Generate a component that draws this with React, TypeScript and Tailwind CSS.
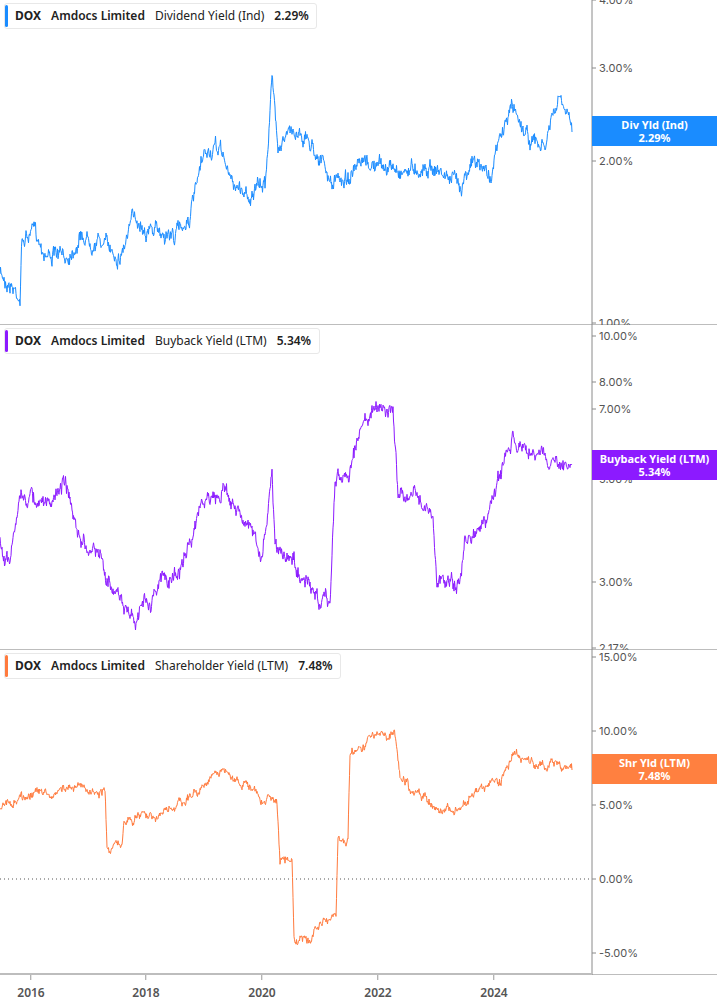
import React from "react";

type Pt = [number, number];

function rng(seed: number) {
  let s = seed;
  return () => {
    s = (s * 16807) % 2147483647;
    return s / 2147483647;
  };
}

function series(keys: Pt[], seed: number, amp: number, offset: number) {
  const r = rng(seed);
  const out: string[] = [];
  let walk = 0;
  for (let i = 0; i < keys.length - 1; i++) {
    const [x0, y0] = keys[i];
    const [x1, y1] = keys[i + 1];
    const steps = Math.max(1, Math.round((x1 - x0) * 2));
    for (let s = 0; s < steps; s++) {
      const t = s / steps;
      walk = walk * 0.85 + (r() - 0.5) * amp;
      const jitter = (r() - 0.5) * amp * 0.9;
      const x = x0 + (x1 - x0) * t;
      const y = y0 + (y1 - y0) * t + walk + jitter;
      out.push(`${x.toFixed(1)},${(y - offset).toFixed(1)}`);
    }
  }
  const last = keys[keys.length - 1];
  out.push(`${last[0]},${last[1] - offset}`);
  return out.join(" ");
}

const divKeys: Pt[] = [
  [0, 275], [8, 280], [20, 295], [22, 240], [35, 232], [45, 250], [65, 260], [80, 235], [100, 240],
  [120, 255], [135, 215], [150, 230], [175, 235], [190, 215], [205, 155], [222, 150], [230, 180],
  [250, 195], [265, 185], [272, 80], [278, 140], [300, 130], [320, 155], [330, 185], [350, 175],
  [370, 165], [400, 170], [430, 165], [460, 185], [470, 160], [490, 175], [500, 140], [512, 105],
  [530, 140], [545, 150], [550, 125], [560, 100], [572, 132],
];
const buyKeys: Pt[] = [
  [0, 540], [10, 560], [20, 490], [40, 510], [65, 485], [80, 540], [100, 560], [120, 600],
  [135, 615], [150, 605], [160, 580], [180, 570], [200, 510], [222, 490], [250, 520], [262, 560],
  [272, 475], [275, 540], [300, 575], [320, 595], [330, 600], [335, 480], [350, 470], [365, 420],
  [380, 410], [393, 410], [398, 490], [420, 500], [433, 520], [437, 580], [460, 585], [465, 540],
  [485, 520], [500, 470], [512, 440], [535, 455], [560, 460], [572, 465],
];
const shrKeys: Pt[] = [
  [0, 810], [20, 800], [60, 790], [105, 790], [107, 848], [122, 848], [124, 820], [150, 815],
  [180, 805], [222, 770], [240, 785], [270, 800], [277, 800], [280, 860], [292, 862], [294, 940],
  [310, 940], [320, 920], [336, 918], [338, 838], [348, 838], [350, 755], [365, 745], [372, 733],
  [395, 735], [400, 775], [410, 790], [430, 800], [440, 810], [460, 810], [480, 790], [500, 780],
  [513, 758], [540, 765], [572, 770],
];

type Tick = { label: string; y: number };

function Panel({
  color, metric, value, keys, seed, amp, offset, ticks, tag, tagY, legendW, zeroY,
}: {
  color: string; metric: string; value: string; keys: Pt[]; seed: number; amp: number; offset: number;
  ticks: Tick[]; tag: string; tagY: number; legendW: string; zeroY?: number;
}) {
  const tagBg =
    color === "#1a8cff" ? "bg-[#1a8cff]" : color === "#8c1aff" ? "bg-[#8c1aff]" : "bg-[#ff8040]";
  const barBg =
    color === "#1a8cff" ? "bg-[#1a8cff]" : color === "#8c1aff" ? "bg-[#8c1aff]" : "bg-[#ff7a3d]";
  return (
    <div className="relative h-[325px] border-b border-[#bdbdbd]">
      <svg width="717" height="325" className="absolute inset-0">
        <line x1="592" y1="0" x2="592" y2="325" stroke="#8a8a8a" strokeWidth="1" />
        {zeroY !== undefined && (
          <line x1="0" y1={zeroY} x2="592" y2={zeroY} stroke="#555" strokeDasharray="1 3" />
        )}
        {ticks.map((t) => (
          <g key={t.label}>
            <line x1="592" y1={t.y} x2="596" y2={t.y} stroke="#8a8a8a" />
            <text x="599" y={t.y + 4} fontSize="11" fill="#555" fontFamily="Inter, sans-serif">
              {t.label}
            </text>
          </g>
        ))}
        <polyline points={series(keys, seed, amp, offset)} fill="none" stroke={color} strokeWidth="1" />
      </svg>
      <div
        className={`absolute left-[4px] top-[3px] ${legendW} h-[26px] flex items-center gap-[10px] bg-white/90 border border-[#e8e8e8] rounded-[3px] pl-[10px] text-[12px] text-[#222] font-['Inter',sans-serif]`}
      >
        <span className={`absolute left-0 top-[1px] bottom-[1px] w-[3px] rounded ${barBg}`} />
        <span className="font-bold">DOX</span>
        <span className="font-semibold">Amdocs Limited</span>
        <span>{metric}</span>
        <span className="font-semibold">{value}</span>
      </div>
      <div
        className={`absolute left-[592px] w-[125px] h-[30px] ${tagBg} text-white text-[11px] font-bold leading-[13px] flex flex-col items-center justify-center font-['Inter',sans-serif]`}
        style={{ top: tagY }}
      >
        <span>{tag}</span>
        <span>{value}</span>
      </div>
    </div>
  );
}

export default function App() {
  return (
    <div className="w-[717px] h-[1005px] bg-white overflow-hidden">
      <Panel
        color="#1a8cff" metric="Dividend Yield (Ind)" value="2.29%" keys={divKeys} seed={7}
        amp={9} offset={0} tag="Div Yld (Ind)" tagY={116} legendW="w-[313px]"
        ticks={[{ label: "4.00%", y: 0 }, { label: "3.00%", y: 68 }, { label: "2.00%", y: 161 }, { label: "1.00%", y: 323 }]}
      />
      <Panel
        color="#8c1aff" metric="Buyback Yield (LTM)" value="5.34%" keys={buyKeys} seed={13}
        amp={9} offset={325} tag="Buyback Yield (LTM)" tagY={125} legendW="w-[316px]"
        ticks={[{ label: "10.00%", y: 11 }, { label: "8.00%", y: 57 }, { label: "7.00%", y: 84 }, { label: "5.00%", y: 154 }, { label: "3.00%", y: 257 }, { label: "2.17%", y: 323 }]}
      />
      <Panel
        color="#ff7a3d" metric="Shareholder Yield (LTM)" value="7.48%" keys={shrKeys} seed={29}
        amp={5} offset={650} tag="Shr Yld (LTM)" tagY={104} legendW="w-[337px]" zeroY={229}
        ticks={[{ label: "15.00%", y: 7 }, { label: "10.00%", y: 81 }, { label: "5.00%", y: 155 }, { label: "0.00%", y: 229 }, { label: "-5.00%", y: 303 }]}
      />
      <div className="relative h-[30px] w-[592px] border-t-2 border-[#bdbdbd] -mt-[2px]">
        {[["2016", 31], ["2018", 146], ["2020", 262], ["2022", 378], ["2024", 494]].map(([y, x]) => (
          <div key={y} className="absolute top-0 flex flex-col items-center -translate-x-1/2" style={{ left: x as number }}>
            <div className="w-px h-[5px] bg-[#999]" />
            <span className="mt-[4px] text-[12px] font-semibold text-[#555] font-['Inter',sans-serif]">{y}</span>
          </div>
        ))}
      </div>
    </div>
  );
}
